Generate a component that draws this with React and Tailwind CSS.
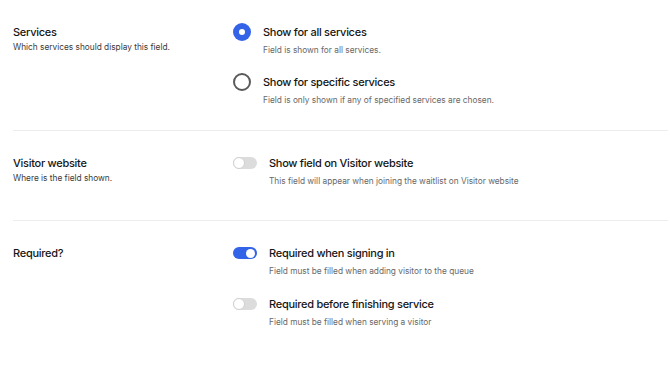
import React from 'react'

function Radio({ checked }) {
  if (checked) {
    return (
      <span className="w-[18px] h-[18px] rounded-full bg-[#3364e8] flex items-center justify-center flex-shrink-0">
        <span className="w-[6px] h-[6px] rounded-full bg-white" />
      </span>
    )
  }
  return <span className="w-[18px] h-[18px] rounded-full border-2 border-[#5a5a5a] flex-shrink-0" />
}

function Toggle({ on }) {
  return (
    <span
      className={
        on
          ? 'w-[24px] h-[12px] rounded-full bg-[#3364e8] flex items-center justify-end px-[2px] flex-shrink-0'
          : 'w-[24px] h-[12px] rounded-full bg-[#dcdcdc] flex items-center justify-start flex-shrink-0'
      }
    >
      <span
        className={
          on
            ? 'w-[9px] h-[9px] rounded-full bg-white'
            : 'w-[12px] h-[12px] rounded-full bg-white border border-[#d0d0d0]'
        }
      />
    </span>
  )
}

function Option({ control, title, desc, toggle }) {
  return (
    <div>
      <div className="flex items-center gap-3">
        {control}
        <span className="text-[11px] leading-[18px] font-medium tracking-[-0.025em] text-[#161616]">{title}</span>
      </div>
      <p className={`text-[8.3px] leading-[14px] text-[#686868] mt-[2px] ${toggle ? 'pl-[36px]' : 'pl-[30px]'}`}>{desc}</p>
    </div>
  )
}

function Section({ title, desc, children, className, gap }) {
  return (
    <div className={`flex ${className}`}>
      <div className="w-[220px] flex-shrink-0">
        <p className="text-[11px] leading-[18px] font-medium tracking-[-0.025em] text-[#161616]">{title}</p>
        {desc && <p className="text-[8.3px] leading-[12px] text-[#3a3a3a]">{desc}</p>}
      </div>
      <div className={`flex flex-col ${gap}`}>{children}</div>
    </div>
  )
}

export default function App() {
  return (
    <div className="w-[670px] h-[371px] bg-white pl-[13px] pr-[2px]" style={{ fontFamily: 'Inter, "Noto Sans", sans-serif' }}>
      <Section title="Services" desc="Which services should display this field." gap="gap-4" className="pt-[23px] pb-[23px] border-b border-[#ededed]">
        <Option control={<Radio checked />} title="Show for all services" desc="Field is shown for all services." />
        <Option control={<Radio />} title="Show for specific services" desc="Field is only shown if any of specified services are chosen." />
      </Section>
      <Section title="Visitor website" desc="Where is the field shown." gap="gap-4" className="pt-[23px] pb-[32px] border-b border-[#ededed]">
        <Option toggle control={<Toggle />} title="Show field on Visitor website" desc="This field will appear when joining the waitlist on Visitor website" />
      </Section>
      <Section title="Required?" gap="gap-[17px]" className="pt-[23px]">
        <Option toggle control={<Toggle on />} title="Required when signing in" desc="Field must be filled when adding visitor to the queue" />
        <Option toggle control={<Toggle />} title="Required before finishing service" desc="Field must be filled when serving a visitor" />
      </Section>
    </div>
  )
}
